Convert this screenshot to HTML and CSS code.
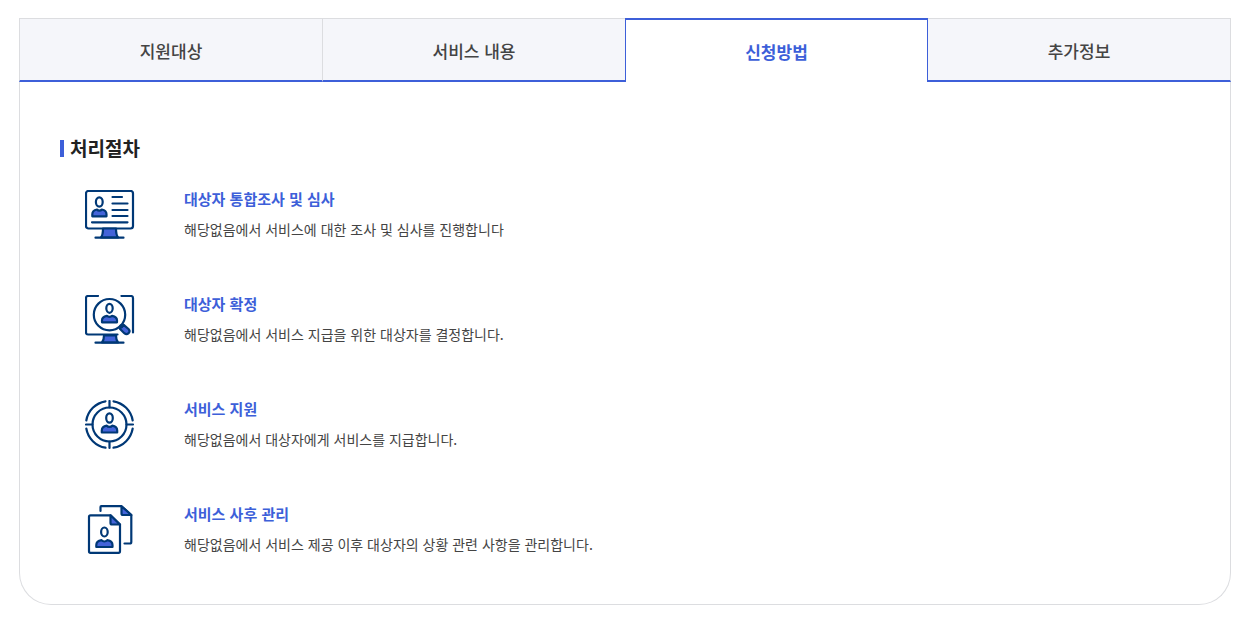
FILE: index.html
```html
<!DOCTYPE html>
<html lang="ko">
<head>
<meta charset="utf-8">
<meta name="viewport" content="width=device-width, initial-scale=1">
<title>신청방법</title>
<link rel="stylesheet" href="styles.css">
</head>
<body>
<main class="service">
  <div class="tabs" role="tablist">
    <button class="tab" type="button" role="tab" aria-selected="false">지원대상</button>
    <button class="tab" type="button" role="tab" aria-selected="false">서비스 내용</button>
    <button class="tab tab-active" type="button" role="tab" id="tab-apply" aria-selected="true" aria-controls="panel-apply">신청방법</button>
    <button class="tab" type="button" role="tab" aria-selected="false">추가정보</button>
  </div>
  <section class="panel" role="tabpanel" id="panel-apply" aria-labelledby="tab-apply">
    <h2 class="heading">처리절차</h2>
    <ol class="steps">
      <li class="step">
        <svg class="icon" viewBox="0 0 50 50" aria-hidden="true">
          <rect x="1" y="1" width="47" height="37.5" rx="2.5"/>
          <path class="fill" d="M18 38.5h13c0 4 .5 7 2 9H16c1.500-2 2-5 2-9z"/>
          <path d="M10.500 47.700h28M27.500 7h9.500M27.500 13.500h15M27.500 20h15M27.500 26h15M7 32.300h35.500"/>
          <ellipse cx="14.300" cy="12" rx="3.400" ry="4.700"/>
          <path class="fill" d="M7.300 26.300v-2c0-3 2-4.300 4.700-4.800 1.200 1.600 3.600 1.600 4.800 0 2.700.5 4.700 1.800 4.700 4.800v2z"/>
        </svg>
        <div class="text">
          <h3 class="title">대상자 통합조사 및 심사</h3>
          <p class="desc">해당없음에서 서비스에 대한 조사 및 심사를 진행합니다</p>
        </div>
      </li>
      <li class="step">
        <svg class="icon" viewBox="0 0 50 50" aria-hidden="true">
          <path d="M13 1H3Q1 1 1 3v34.500q0 2 2 2h29.500M36.500 1H46q2 0 2 2v34.500"/>
          <path class="fill" d="M19 40.500h12c0 3 .5 5 2 7H17c1.500-2 2-4 2-7z"/>
          <path d="M10.500 47.700h28"/>
          <path class="fill" d="M34.800 33.800l3.900-3.900 4.800 4.100c2.800 2.800-1.200 6.800-4.200 4.200z"/>
          <circle cx="24.500" cy="19.700" r="15.700"/>
          <path d="M35.500 30.500l1.500 1.500"/>
          <ellipse cx="24.500" cy="13.300" rx="3.200" ry="4.500"/>
          <path class="fill" d="M17 27.300v-2c0-3 2-4 4.900-4.500 1.300 1.400 3.900 1.400 5.200 0 2.900.5 4.900 1.500 4.900 4.500v2z"/>
        </svg>
        <div class="text">
          <h3 class="title">대상자 확정</h3>
          <p class="desc">해당없음에서 서비스 지급을 위한 대상자를 결정합니다.</p>
        </div>
      </li>
      <li class="step">
        <svg class="icon" viewBox="0 0 50 50" aria-hidden="true">
          <circle cx="24.500" cy="24.500" r="17"/>
          <path d="M24.500 1v6.500M24.500 41.500V48M1 24.500h6.500M41.500 24.500H48"/>
          <path d="M28.500 1.300A23.500 23.500 0 0 1 47.700 20.500M47.700 28.500A23.500 23.500 0 0 1 28.500 47.700M20.500 47.700A23.500 23.500 0 0 1 1.300 28.500M1.300 20.500A23.500 23.500 0 0 1 20.500 1.300"/>
          <ellipse cx="24.500" cy="18" rx="3.300" ry="4.700"/>
          <path class="fill" d="M16.800 32.500v-2c0-3 2-4.300 5-4.800 1.300 1.500 4.100 1.500 5.400 0 3 .5 5 1.800 5 4.800v2z"/>
        </svg>
        <div class="text">
          <h3 class="title">서비스 지원</h3>
          <p class="desc">해당없음에서 대상자에게 서비스를 지급합니다.</p>
        </div>
      </li>
      <li class="step">
        <svg class="icon" viewBox="0 0 50 50" aria-hidden="true">
          <path d="M15.500 6V2q0-.8.800-.8h20.200L46.300 10v27q0 1.500-1.500 1.500H39.500"/>
          <path class="fill" d="M36.500 1.200L46.300 10h-8.300q-1.500 0-1.500-1.500z"/>
          <path d="M25.500 10.300H5.500q-1.500 0-1.500 1.500v34.500q0 1.500 1.500 1.500h28q1.500 0 1.500-1.500V19.500z"/>
          <path class="fill" d="M25.500 10.300L35 19.500h-8q-1.500 0-1.500-1.500z"/>
          <ellipse cx="19.400" cy="27" rx="3.300" ry="4.500"/>
          <path class="fill" d="M11.300 42v-2c0-3 2.200-4.300 5.300-4.800 1.500 1.500 4.100 1.500 5.600 0 3.100.5 5.300 1.800 5.300 4.800v2z"/>
        </svg>
        <div class="text">
          <h3 class="title">서비스 사후 관리</h3>
          <p class="desc">해당없음에서 서비스 제공 이후 대상자의 상황 관련 사항을 관리합니다.</p>
        </div>
      </li>
    </ol>
  </section>
</main>
</body>
</html>
```
FILE: styles.css
```css
* {
  box-sizing: border-box;
}

body {
  margin: 0;
  background: #fff;
  color: #222;
  font-family: "Noto Sans CJK KR", sans-serif;
}

.service {
  padding: 18px 17px 14px 19px;
}

.tabs {
  display: grid;
  grid-template-columns: repeat(4, 1fr);
}

.tab {
  height: 64px;
  padding: 2px 0 0;
  border: 1px solid #dcdde0;
  border-right-width: 0;
  border-bottom: 2px solid #3d5fd9;
  background: #f5f6fa;
  color: #444;
  font-family: inherit;
  font-size: 17px;
  font-weight: 500;
  line-height: 24px;
  cursor: pointer;
}

.tab:last-child {
  border-right-width: 1px;
}

.tab-active {
  border: 1px solid #3d5fd9;
  border-top-width: 2px;
  border-bottom-width: 0;
  background: #fff;
  color: #3d5fd9;
  font-weight: 700;
}

.tab-active + .tab {
  border-left-width: 0;
}

.panel {
  padding: 52px 40px 43px;
  border: 1px solid #dcdde0;
  border-top: 0;
  border-radius: 0 0 32px 32px;
}

.heading {
  display: flex;
  align-items: center;
  gap: 6px;
  margin: 0 0 28px;
  font-size: 19px;
  font-weight: 700;
  line-height: 28px;
}

.heading::before {
  width: 4px;
  height: 17px;
  background: #3d5fd9;
  content: "";
}

.steps {
  display: grid;
  gap: 49px;
  margin: 0;
  padding: 0 0 0 25px;
  list-style: none;
}

.step {
  display: flex;
  gap: 49px;
  min-height: 56px;
}

.icon {
  flex: none;
  width: 50px;
  height: 50px;
  fill: none;
  stroke: #003876;
  stroke-width: 2.2;
  stroke-linecap: round;
  stroke-linejoin: round;
}

.fill {
  fill: #4464d9;
}

.title {
  margin: 0 0 8px;
  color: #3d5fd9;
  font-size: 15px;
  font-weight: 700;
  line-height: 18px;
}

.desc {
  margin: 0;
  color: #444;
  font-size: 14px;
  line-height: 26px;
}
```
